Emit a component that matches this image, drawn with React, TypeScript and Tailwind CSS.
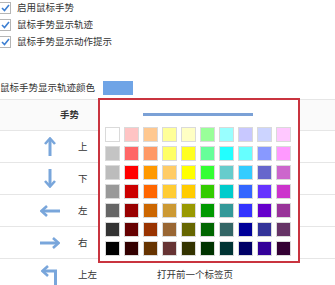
import React from "react";

const COLORS: string[][] = [
  ["#ffffff", "#ffc4c4", "#ffc890", "#ffff99", "#ffffc4", "#99ff99", "#99ffff", "#c8c8ff", "#ccd4ff", "#ffc8ff"],
  ["#c4c4c4", "#ff6666", "#ff9966", "#ffff66", "#ffff22", "#66ff99", "#22ffff", "#66ffff", "#8899ff", "#ff99ff"],
  ["#bcbcbc", "#ff0000", "#ff9900", "#ffcc66", "#ffff00", "#33ff33", "#66cccc", "#33ccff", "#6666cc", "#cc66cc"],
  ["#999999", "#cc0000", "#ff6600", "#ffcc33", "#ffcc00", "#33cc00", "#00cccc", "#3366ff", "#6633ff", "#cc33cc"],
  ["#666666", "#990000", "#cc6600", "#cc9933", "#999900", "#009900", "#339999", "#3333ff", "#6600cc", "#993399"],
  ["#333333", "#660000", "#993300", "#996633", "#666600", "#006600", "#336666", "#000099", "#333399", "#663366"],
  ["#000000", "#330000", "#663300", "#663333", "#333300", "#003300", "#003333", "#000066", "#330099", "#330033"],
];

const FONT = { fontFamily: '"Noto Sans CJK SC", "Noto Sans", sans-serif' };

function Check({ label }: { label: string }) {
  return (
    <div className="flex h-[17px] items-center">
      <div className="ml-[-1px] flex h-[12px] w-[12px] items-center justify-center border border-[#b5b5b5] bg-white">
        <svg width="9" height="8" viewBox="0 0 9 8">
          <path d="M1 4 L3.5 6.5 L8 1" fill="none" stroke="#3d7fd2" strokeWidth="1.6" />
        </svg>
      </div>
      <span className="ml-[6px] text-[9.5px] leading-none text-[#333]">{label}</span>
    </div>
  );
}

const C = "#79a6db";

function Up() {
  return (
    <svg width="12" height="19" viewBox="0 0 12 19">
      <path d="M6 2 V19" stroke={C} strokeWidth="3" fill="none" />
      <path d="M1 7 L6 1.5 L11 7" stroke={C} strokeWidth="2.6" fill="none" strokeLinejoin="miter" />
    </svg>
  );
}
function Down() {
  return (
    <svg width="12" height="19" viewBox="0 0 12 19">
      <path d="M6 0 V17" stroke={C} strokeWidth="3" fill="none" />
      <path d="M1 12 L6 17.5 L11 12" stroke={C} strokeWidth="2.6" fill="none" />
    </svg>
  );
}
function Left() {
  return (
    <svg width="20" height="12" viewBox="0 0 20 12">
      <path d="M2 6 H20" stroke={C} strokeWidth="3" fill="none" />
      <path d="M7 1 L1.5 6 L7 11" stroke={C} strokeWidth="2.6" fill="none" />
    </svg>
  );
}
function Right() {
  return (
    <svg width="20" height="12" viewBox="0 0 20 12">
      <path d="M0 6 H18" stroke={C} strokeWidth="3" fill="none" />
      <path d="M13 1 L18.5 6 L13 11" stroke={C} strokeWidth="2.6" fill="none" />
    </svg>
  );
}
function UpLeft() {
  return (
    <svg width="18" height="20" viewBox="0 0 18 20">
      <path d="M2 6 H14.5 V20" stroke={C} strokeWidth="3" fill="none" />
      <path d="M7 1 L1.5 6 L7 11" stroke={C} strokeWidth="2.6" fill="none" />
    </svg>
  );
}

function Row({ icon, label, action, last }: { icon: React.ReactNode; label: string; action?: string; last?: boolean }) {
  return (
    <div className={`flex h-[32px] items-center ${last ? "" : "border-b border-[#e6e6e6]"}`}>
      <div className="ml-[40px] flex w-[20px] items-center justify-center">{icon}</div>
      <span className="ml-[18px] w-[79px] text-[9.5px] leading-none text-[#333]">{label}</span>
      {action && <span className="text-[9.5px] leading-none text-[#333]">{action}</span>}
    </div>
  );
}

export default function App() {
  return (
    <div className="relative h-[285px] w-[335px] overflow-hidden bg-white" style={FONT}>
      <div className="mt-[-1px] flex flex-col">
        <Check label="启用鼠标手势" />
        <Check label="鼠标手势显示轨迹" />
        <Check label="鼠标手势显示动作提示" />
      </div>
      <div className="mt-[30px] flex h-[15px] items-center">
        <span className="text-[9.5px] leading-none text-[#333]">鼠标手势显示轨迹颜色</span>
        <div className="ml-[8px] h-[14px] w-[30px] bg-[#6fa4e6]" />
      </div>
      <div className="mt-[4px] flex flex-col">
        <div className="flex h-[32px] items-center border-y border-[#e6e6e6] bg-[#fafafa]">
          <span className="ml-[60px] text-[9.5px] font-bold leading-none text-[#333]">手势</span>
        </div>
        <Row icon={<Up />} label="上" />
        <Row icon={<Down />} label="下" />
        <Row icon={<Left />} label="左" />
        <Row icon={<Right />} label="右" />
        <Row icon={<UpLeft />} label="上左" action="打开前一个标签页" last />
      </div>

      <div className="absolute left-[98px] top-[98px] flex h-[165px] w-[202px] flex-col border-2 border-[#c9343f] bg-white pl-[5px]">
        <div className="ml-[38px] mt-[13px] h-[3px] w-[110px] bg-[#7ba1d6]" />
        <div className="mt-[11px] flex flex-col gap-[4px]">
          {COLORS.map((row, i) => (
            <div key={i} className="flex gap-[4px]">
              {row.map((c, j) => (
                <div
                  key={j}
                  className="h-[15px] w-[15px] border border-[#dadada]"
                  style={{ backgroundColor: c }}
                />
              ))}
            </div>
          ))}
        </div>
      </div>
    </div>
  );
}
